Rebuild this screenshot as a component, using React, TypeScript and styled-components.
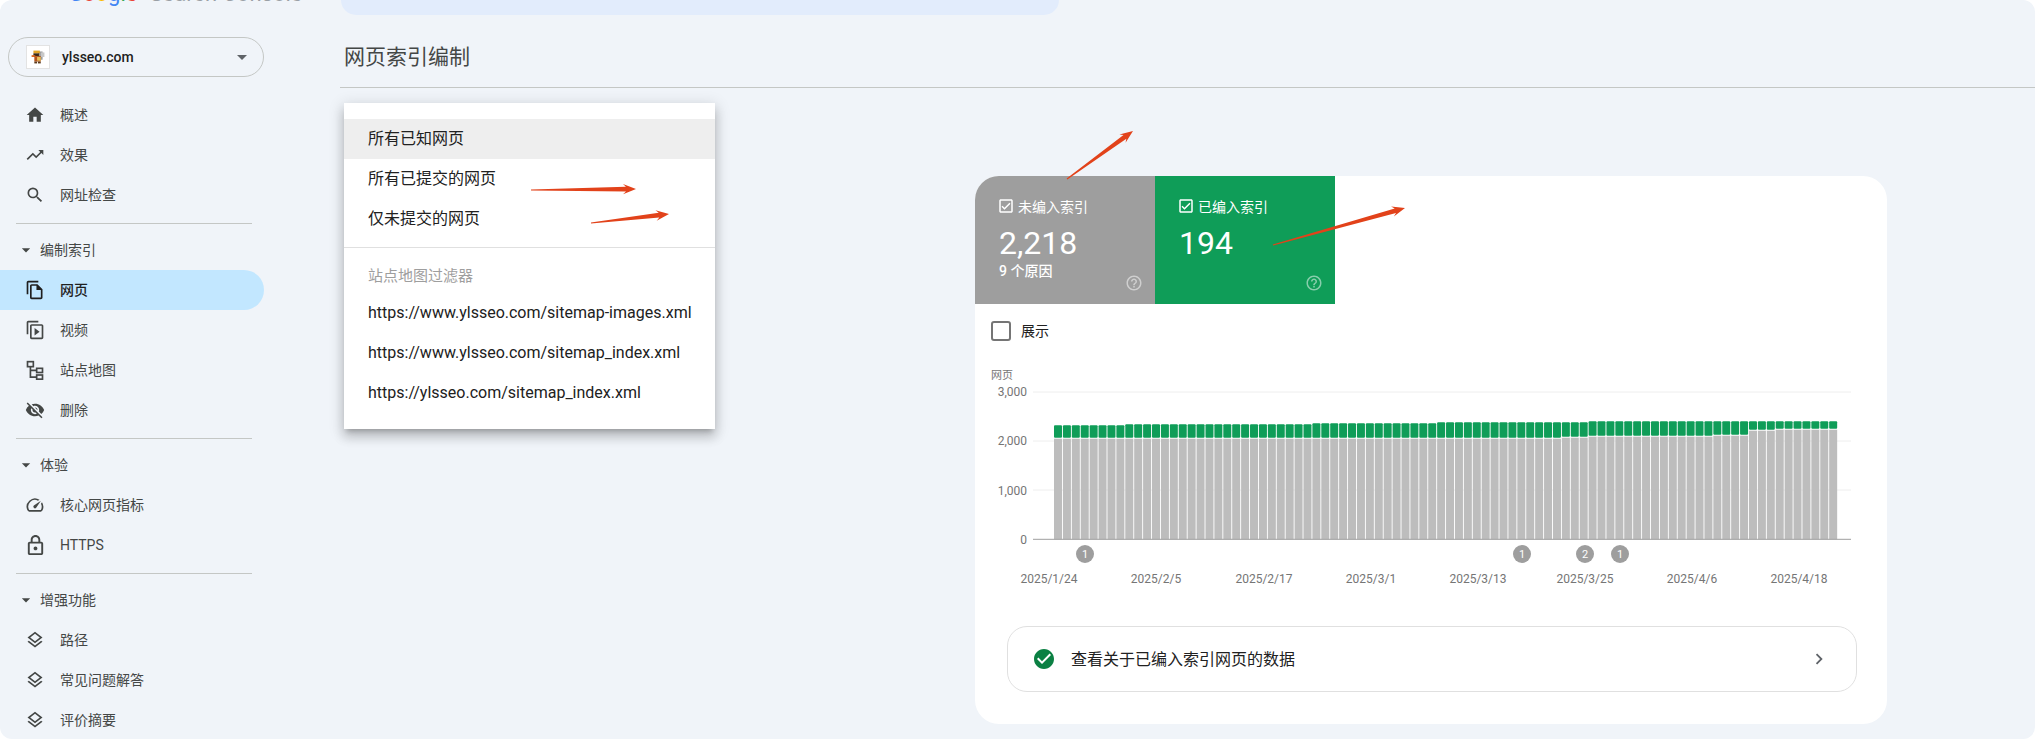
import React from "react";
import styled, { createGlobalStyle } from "styled-components";
import {
  MdArrowDropDown,
  MdCheckCircle,
  MdChevronRight,
  MdHelpOutline,
  MdHome,
  MdOutlineCheckBox,
  MdOutlineLayers,
  MdOutlineLock,
  MdOutlineSpeed,
  MdSearch,
  MdTrendingUp,
  MdVisibilityOff,
} from "react-icons/md";

const GlobalStyle = createGlobalStyle`
  html, body {
    margin: 0;
    padding: 0;
    background: #ffffff;
    font-family: Roboto, "Noto Sans CJK SC", "Liberation Sans", sans-serif;
  }
`;

const Page = styled.div`
  position: relative;
  display: flex;
  width: 2035px;
  height: 739px;
  overflow: hidden;
  background: #f0f4f9;
  border-radius: 12px;
`;

const Sidebar = styled.aside`
  flex: 0 0 340px;
  display: flex;
  flex-direction: column;
`;

const LogoStrip = styled.div`
  flex: none;
  height: 6px;
  overflow: hidden;
  padding-left: 68px;
`;

const LogoText = styled.div`
  display: flex;
  margin-top: -17px;
  font-size: 22px;
  line-height: 22px;
  white-space: nowrap;
  color: #9aa0a6;
`;

const LogoLetter = styled.span<{ $color: string }>`
  color: ${(p) => p.$color};
`;

const LogoProduct = styled.span`
  margin-left: 12px;
`;

const SiteSelect = styled.div`
  flex: none;
  display: flex;
  align-items: center;
  box-sizing: border-box;
  width: 256px;
  height: 40px;
  margin: 31px 0 0 8px;
  padding: 0 9px 0 17px;
  border: 1px solid #c4c7c5;
  border-radius: 20px;
  font-size: 14px;
  font-weight: 500;
  color: #1f1f1f;
`;

const Favicon = styled.svg`
  flex: none;
  width: 24px;
  height: 24px;
  margin-right: 12px;
  background: #fff;
  border: 1px solid #e3e3e3;
  box-sizing: border-box;
`;

const SelectCaret = styled(MdArrowDropDown)`
  margin-left: auto;
  font-size: 24px;
  color: #5f6368;
`;

const NavList = styled.nav`
  flex: none;
  display: flex;
  flex-direction: column;
  margin-top: 18px;
`;

const NavItem = styled.div<{ $active?: boolean; $latin?: boolean }>`
  flex: none;
  display: flex;
  align-items: center;
  gap: 15px;
  box-sizing: border-box;
  width: 264px;
  height: 40px;
  padding: 0 0 ${(p) => (p.$latin ? 0 : 2)}px 25px;
  border-radius: 0 20px 20px 0;
  font-size: 14px;
  color: ${(p) => (p.$active ? "#1f1f1f" : "#444746")};
  background: ${(p) => (p.$active ? "#c2e7ff" : "transparent")};
  font-weight: ${(p) => (p.$active ? 500 : 400)};

  svg {
    flex: none;
    width: 20px;
    height: 20px;
    margin-top: ${(p) => (p.$latin ? 0 : 2)}px;
    color: ${(p) => (p.$active ? "#1f1f1f" : "#444746")};
  }
`;

const LockIcon = styled(MdOutlineLock)`
  && {
    width: 23px;
    height: 23px;
    margin: 0 -2px 0 -1px;
  }
`;

const NavDivider = styled.div`
  flex: none;
  width: 236px;
  height: 1px;
  margin: 8px 0 6px 16px;
  background: #c4c7c5;
`;

const NavSection = styled.div`
  flex: none;
  display: flex;
  align-items: center;
  box-sizing: border-box;
  height: 40px;
  padding: 0 0 2px 16px;
  font-size: 14px;
  color: #444746;

  svg {
    width: 20px;
    height: 20px;
    margin: 2px 4px 0 0;
    color: #444746;
  }
`;

const Main = styled.main`
  flex: 1;
  display: flex;
  flex-direction: column;
`;

const SearchBar = styled.div`
  flex: none;
  width: 718px;
  height: 15px;
  margin-left: 1px;
  background: #e2ecfc;
  border-radius: 0 0 24px 24px;
`;

const TitleBar = styled.header`
  flex: none;
  display: flex;
  align-items: center;
  box-sizing: border-box;
  height: 73px;
  padding: 8px 0 0 4px;
  border-bottom: 1px solid #c4c7c5;
`;

const Title = styled.h1`
  margin: 0;
  font-size: 21px;
  font-weight: 400;
  color: #444746;
`;

const Content = styled.section`
  position: relative;
  flex: 1;
`;

const FilterMenu = styled.div`
  position: absolute;
  left: 4px;
  top: 15px;
  box-sizing: border-box;
  width: 371px;
  height: 326px;
  padding: 16px 0;
  background: #fff;
  box-shadow: 0 8px 10px 1px rgba(0, 0, 0, 0.14),
    0 3px 14px 2px rgba(0, 0, 0, 0.12), 0 5px 5px -3px rgba(0, 0, 0, 0.2);
  z-index: 2;
`;

const MenuItem = styled.div<{ $selected?: boolean }>`
  display: flex;
  align-items: center;
  box-sizing: border-box;
  height: 40px;
  padding: 0 0 4px 24px;
  font-size: 16px;
  color: #212121;
  white-space: nowrap;
  background: ${(p) => (p.$selected ? "#eeeeee" : "transparent")};
`;

const SitemapItem = styled(MenuItem)`
  padding-bottom: 0;
`;

const MenuDivider = styled.div`
  height: 1px;
  margin: 8px 0 0;
  background: #e0e0e0;
`;

const MenuHeading = styled.div`
  display: flex;
  align-items: center;
  box-sizing: border-box;
  height: 44px;
  padding: 8px 0 0 24px;
  font-size: 15px;
  color: #9e9e9e;
`;

const Card = styled.div`
  width: 912px;
  margin: 88px 0 0 635px;
  background: #fff;
  border-radius: 24px;
  overflow: hidden;
`;

const Tabs = styled.div`
  display: flex;
`;

const Tab = styled.div<{ $color: string }>`
  position: relative;
  box-sizing: border-box;
  width: 180px;
  height: 128px;
  padding: 21px 0 0 24px;
  color: #fff;
  background: ${(p) => p.$color};
`;

const TabLabel = styled.div`
  display: flex;
  align-items: center;
  gap: 3px;
  height: 18px;
  margin-left: -2px;
  font-size: 14px;

  svg {
    width: 18px;
    height: 18px;
  }
`;

const TabValue = styled.div`
  margin-top: 10px;
  font-size: 32px;
  line-height: 36px;
`;

const TabNote = styled.div`
  margin-top: 1px;
  font-size: 14px;
  font-weight: 500;
  line-height: 18px;
`;

const TabHelp = styled(MdHelpOutline)`
  position: absolute;
  right: 12px;
  bottom: 12px;
  width: 18px;
  height: 18px;
  color: rgba(255, 255, 255, 0.5);
`;

const ShowRow = styled.label`
  display: flex;
  align-items: flex-start;
  gap: 10px;
  box-sizing: border-box;
  height: 61px;
  padding: 17px 0 0 16px;
  font-size: 14px;
  line-height: 20px;
  color: #212121;
`;

const ShowBox = styled.span`
  box-sizing: border-box;
  width: 20px;
  height: 20px;
  border: 2px solid #757575;
  border-radius: 3px;
`;

const Chart = styled.svg`
  display: block;
  width: 912px;
  height: 225px;
  font-family: Roboto, "Noto Sans CJK SC", sans-serif;
  font-size: 12px;
  fill: #757575;
`;

const InfoLink = styled.div`
  display: flex;
  align-items: center;
  box-sizing: border-box;
  width: 850px;
  height: 66px;
  margin: 36px 0 32px 32px;
  padding: 0 26px 0 24px;
  border: 1px solid #e0e0e0;
  border-radius: 20px;
  font-size: 16px;
  color: #212121;
`;

const InfoCheck = styled(MdCheckCircle)`
  flex: none;
  width: 24px;
  height: 24px;
  margin-right: 15px;
  color: #0b8043;
`;

const InfoText = styled.span`
  margin-bottom: 2px;
`;

const InfoChevron = styled(MdChevronRight)`
  margin-left: auto;
  width: 22px;
  height: 22px;
  color: #5f6368;
`;

const ArrowLayer = styled.svg`
  position: absolute;
  left: 0;
  top: 0;
  width: 2035px;
  height: 739px;
  pointer-events: none;
  z-index: 3;
`;

const PagesIcon = () => (
  <svg viewBox="0 0 24 24" fill="currentColor">
    <path d="M16 1H4c-1.1 0-2 .9-2 2v14h2V3h12V1z" />
    <path d="M15 5H8c-1.1 0-1.99.9-1.99 2L6 21c0 1.1.89 2 1.99 2H19c1.1 0 2-.9 2-2V11l-6-6zM8 21V7h6v5h5v9H8z" />
    <path d="M14 5.5V12h6.5z" />
  </svg>
);

const VideoIcon = () => (
  <svg viewBox="0 0 24 24" fill="currentColor" fillRule="evenodd">
    <path d="M16 1H4c-1.1 0-2 .9-2 2v14h2V3h12V1z" />
    <path d="M20 5H8c-1.1 0-2 .9-2 2v14c0 1.1.9 2 2 2h12c1.1 0 2-.9 2-2V7c0-1.1-.9-2-2-2zm0 16H8V7h12v14z" />
    <path d="M11.5 9.5v9l6-4.5z" />
  </svg>
);

const SitemapIcon = () => (
  <svg viewBox="0 0 24 24" fill="none" stroke="currentColor" strokeWidth="2">
    <rect x="3" y="2" width="7" height="6" />
    <rect x="14" y="10" width="7" height="5" />
    <rect x="14" y="18" width="7" height="5" />
    <path d="M6.5 8v12.5H14M6.5 12.5H14" />
  </svg>
);

const FaviconArt = () => (
  <Favicon viewBox="0 0 24 24">
    <rect x="12" y="6" width="5" height="9" fill="#9a9a9a" />
    <rect x="15" y="7" width="4" height="5" fill="#c8c8c8" />
    <rect x="7" y="5" width="7" height="3" fill="#e0a526" />
    <rect x="7" y="8" width="6" height="3" fill="#3b2a1a" />
    <rect x="5" y="10" width="4" height="2" fill="#d9661f" />
    <rect x="8" y="11" width="7" height="6" fill="#b5541c" />
    <rect x="11" y="12" width="4" height="4" fill="#e8c15a" />
    <rect x="8" y="17" width="3" height="2" fill="#5a3a1c" />
    <rect x="12" y="17" width="3" height="2" fill="#5a3a1c" />
  </Favicon>
);

const BAR_COUNT = 88;
const BAR_PITCH = 8.91;
const BASE_Y = 174.3;

const greenTop = (i: number) => {
  if (i < 8) return 60.3;
  if (i < 29) return 59.3;
  if (i < 43) return 58.3;
  if (i < 60) return 57.3;
  return 56.3;
};

const grayTop = (i: number) => {
  if (i < 57) return 73.7;
  if (i < 60) return 72.7;
  if (i < 74) return 71.7;
  if (i < 78) return 70.7;
  if (i < 81) return 65.7;
  return 64.7;
};

const gridLines = [
  { label: "3,000", y: 27, labelY: 31 },
  { label: "2,000", y: 76, labelY: 80 },
  { label: "1,000", y: 125, labelY: 129.5 },
];

const dates = [
  { label: "2025/1/24", x: 74 },
  { label: "2025/2/5", x: 181 },
  { label: "2025/2/17", x: 289 },
  { label: "2025/3/1", x: 396 },
  { label: "2025/3/13", x: 503 },
  { label: "2025/3/25", x: 610 },
  { label: "2025/4/6", x: 717 },
  { label: "2025/4/18", x: 824 },
];

const events = [
  { label: "1", x: 110 },
  { label: "1", x: 547 },
  { label: "2", x: 610 },
  { label: "1", x: 645 },
];

const IndexChart = () => (
  <Chart viewBox="0 0 912 225">
    <text x="16" y="14" fontSize="11">
      网页
    </text>
    {gridLines.map((g) => (
      <g key={g.label}>
        <line x1="58" x2="876" y1={g.y} y2={g.y} stroke="#eeeeee" />
        <text x="52" y={g.labelY} textAnchor="end">
          {g.label}
        </text>
      </g>
    ))}
    <text x="52" y={BASE_Y + 4.5} textAnchor="end">
      0
    </text>
    {Array.from({ length: BAR_COUNT }, (_, i) => {
      const x = 79 + i * BAR_PITCH;
      const gt = grayTop(i);
      const top = greenTop(i);
      return (
        <g key={i}>
          <rect x={x} y={gt} width="8" height={BASE_Y - gt} fill="#bdbdbd" />
          <rect
            x={x}
            y={top}
            width="8"
            height={gt - top - 1}
            rx="1"
            fill="#0f9d58"
          />
        </g>
      );
    })}
    <line x1="58" x2="876" y1={BASE_Y} y2={BASE_Y} stroke="#9e9e9e" />
    {events.map((e) => (
      <g key={e.x}>
        <circle cx={e.x} cy="189" r="9" fill="#9e9e9e" />
        <text x={e.x} y="193" textAnchor="middle" fontSize="11" fill="#fff">
          {e.label}
        </text>
      </g>
    ))}
    {dates.map((d) => (
      <text key={d.label} x={d.x} y="218" textAnchor="middle">
        {d.label}
      </text>
    ))}
  </Chart>
);

const arrows = [
  { from: [531, 190], to: [636, 189] },
  { from: [591, 223], to: [669, 214] },
  { from: [1067, 179], to: [1133, 131] },
  { from: [1273, 245], to: [1405, 208] },
];

const arrowPoints = (from: number[], to: number[]) => {
  const dx = to[0] - from[0];
  const dy = to[1] - from[1];
  const len = Math.hypot(dx, dy);
  const ux = dx / len;
  const uy = dy / len;
  const at = (along: number, side: number) =>
    `${to[0] - ux * along - uy * side},${to[1] - uy * along + ux * side}`;
  return [
    at(len, 0.6),
    at(10, 2.4),
    at(13, 5.2),
    `${to[0]},${to[1]}`,
    at(13, -5.2),
    at(10, -2.4),
    at(len, -0.6),
  ].join(" ");
};

const App: React.FC = () => {
  return (
    <>
      <GlobalStyle />
      <Page>
        <Sidebar>
          <LogoStrip>
            <LogoText>
              <LogoLetter $color="#4285f4">G</LogoLetter>
              <LogoLetter $color="#ea4335">o</LogoLetter>
              <LogoLetter $color="#fbbc05">o</LogoLetter>
              <LogoLetter $color="#4285f4">g</LogoLetter>
              <LogoLetter $color="#34a853">l</LogoLetter>
              <LogoLetter $color="#ea4335">e</LogoLetter>
              <LogoProduct>Search Console</LogoProduct>
            </LogoText>
          </LogoStrip>
          <SiteSelect>
            <FaviconArt />
            ylsseo.com
            <SelectCaret />
          </SiteSelect>
          <NavList>
            <NavItem>
              <MdHome />
              概述
            </NavItem>
            <NavItem>
              <MdTrendingUp />
              效果
            </NavItem>
            <NavItem>
              <MdSearch />
              网址检查
            </NavItem>
            <NavDivider />
            <NavSection>
              <MdArrowDropDown />
              编制索引
            </NavSection>
            <NavItem $active>
              <PagesIcon />
              网页
            </NavItem>
            <NavItem>
              <VideoIcon />
              视频
            </NavItem>
            <NavItem>
              <SitemapIcon />
              站点地图
            </NavItem>
            <NavItem>
              <MdVisibilityOff />
              删除
            </NavItem>
            <NavDivider />
            <NavSection>
              <MdArrowDropDown />
              体验
            </NavSection>
            <NavItem>
              <MdOutlineSpeed />
              核心网页指标
            </NavItem>
            <NavItem $latin>
              <LockIcon />
              HTTPS
            </NavItem>
            <NavDivider />
            <NavSection>
              <MdArrowDropDown />
              增强功能
            </NavSection>
            <NavItem>
              <MdOutlineLayers />
              路径
            </NavItem>
            <NavItem>
              <MdOutlineLayers />
              常见问题解答
            </NavItem>
            <NavItem>
              <MdOutlineLayers />
              评价摘要
            </NavItem>
          </NavList>
        </Sidebar>
        <Main>
          <SearchBar />
          <TitleBar>
            <Title>网页索引编制</Title>
          </TitleBar>
          <Content>
            <FilterMenu>
              <MenuItem $selected>所有已知网页</MenuItem>
              <MenuItem>所有已提交的网页</MenuItem>
              <MenuItem>仅未提交的网页</MenuItem>
              <MenuDivider />
              <MenuHeading>站点地图过滤器</MenuHeading>
              <SitemapItem>https://www.ylsseo.com/sitemap-images.xml</SitemapItem>
              <SitemapItem>https://www.ylsseo.com/sitemap_index.xml</SitemapItem>
              <SitemapItem>https://ylsseo.com/sitemap_index.xml</SitemapItem>
            </FilterMenu>
            <Card>
              <Tabs>
                <Tab $color="#9e9e9e">
                  <TabLabel>
                    <MdOutlineCheckBox />
                    未编入索引
                  </TabLabel>
                  <TabValue>2,218</TabValue>
                  <TabNote>9 个原因</TabNote>
                  <TabHelp />
                </Tab>
                <Tab $color="#0f9d58">
                  <TabLabel>
                    <MdOutlineCheckBox />
                    已编入索引
                  </TabLabel>
                  <TabValue>194</TabValue>
                  <TabHelp />
                </Tab>
              </Tabs>
              <ShowRow>
                <ShowBox />
                展示
              </ShowRow>
              <IndexChart />
              <InfoLink>
                <InfoCheck />
                <InfoText>查看关于已编入索引网页的数据</InfoText>
                <InfoChevron />
              </InfoLink>
            </Card>
          </Content>
        </Main>
        <ArrowLayer viewBox="0 0 2035 739">
          {arrows.map((a) => (
            <polygon
              key={a.to.join()}
              points={arrowPoints(a.from, a.to)}
              fill="#e2421a"
            />
          ))}
        </ArrowLayer>
      </Page>
    </>
  );
};

export default App;
